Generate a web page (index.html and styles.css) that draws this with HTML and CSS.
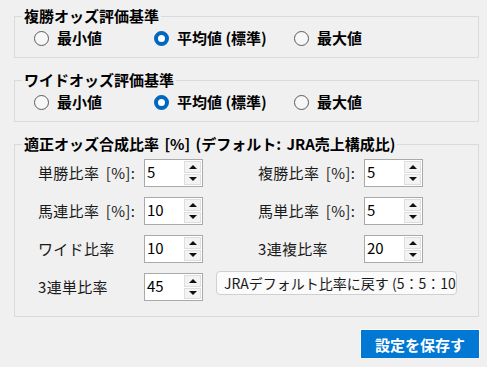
FILE: index.html
```html
<!DOCTYPE html>
<html lang="ja">
  <head>
    <meta charset="UTF-8" />
    <meta name="viewport" content="width=device-width, initial-scale=1.0" />
    <link rel="stylesheet" href="styles.css">
    <title>設定</title>
  </head>
  <body>
    <div class="wrapper">
      <fieldset class="group">
        <legend class="group__title">複勝オッズ評価基準</legend>
        <div class="radios">
          <label class="radio"><span class="radio__dot"></span>最小値</label>
          <label class="radio radio_wide"><span class="radio__dot radio__dot_on"></span>平均値 (標準)</label>
          <label class="radio"><span class="radio__dot"></span>最大値</label>
        </div>
      </fieldset>

      <fieldset class="group">
        <legend class="group__title">ワイドオッズ評価基準</legend>
        <div class="radios">
          <label class="radio"><span class="radio__dot"></span>最小値</label>
          <label class="radio radio_wide"><span class="radio__dot radio__dot_on"></span>平均値 (標準)</label>
          <label class="radio"><span class="radio__dot"></span>最大値</label>
        </div>
      </fieldset>

      <fieldset class="group group_last">
        <legend class="group__title">適正オッズ合成比率 [%] (デフォルト: JRA売上構成比)</legend>
        <div class="rates">
          <span class="rates__label">単勝比率 [%]:</span>
          <div class="spin"><span class="spin__value">5</span><div class="spin__btns"><span class="spin__btn"><i class="arrow arrow_up"></i></span><span class="spin__btn"><i class="arrow arrow_down"></i></span></div></div>
          <span></span>
          <span class="rates__label">複勝比率 [%]:</span>
          <div class="spin"><span class="spin__value">5</span><div class="spin__btns"><span class="spin__btn"><i class="arrow arrow_up"></i></span><span class="spin__btn"><i class="arrow arrow_down"></i></span></div></div>

          <span class="rates__label">馬連比率 [%]:</span>
          <div class="spin"><span class="spin__value">10</span><div class="spin__btns"><span class="spin__btn"><i class="arrow arrow_up"></i></span><span class="spin__btn"><i class="arrow arrow_down"></i></span></div></div>
          <span></span>
          <span class="rates__label">馬単比率 [%]:</span>
          <div class="spin"><span class="spin__value">5</span><div class="spin__btns"><span class="spin__btn"><i class="arrow arrow_up"></i></span><span class="spin__btn"><i class="arrow arrow_down"></i></span></div></div>

          <span class="rates__label">ワイド比率</span>
          <div class="spin"><span class="spin__value">10</span><div class="spin__btns"><span class="spin__btn"><i class="arrow arrow_up"></i></span><span class="spin__btn"><i class="arrow arrow_down"></i></span></div></div>
          <span></span>
          <span class="rates__label">3連複比率</span>
          <div class="spin"><span class="spin__value">20</span><div class="spin__btns"><span class="spin__btn"><i class="arrow arrow_up"></i></span><span class="spin__btn"><i class="arrow arrow_down"></i></span></div></div>

          <span class="rates__label">3連単比率</span>
          <div class="spin"><span class="spin__value">45</span><div class="spin__btns"><span class="spin__btn"><i class="arrow arrow_up"></i></span><span class="spin__btn"><i class="arrow arrow_down"></i></span></div></div>
          <button class="reset">JRAデフォルト比率に戻す (5：5：10</button>
        </div>
      </fieldset>

      <div class="actions">
        <button class="save">設定を保存す</button>
      </div>
    </div>
  </body>
</html>
```

FILE: styles.css
```css
*,
*::after,
*::before {
  box-sizing: border-box;
  margin: 0;
  padding: 0;
}

body {
  background: #f0f0f0;
  font-family: "Noto Sans CJK JP", "Noto Sans", sans-serif;
  color: #000;
}

.wrapper {
  width: 465px;
  margin-left: 14px;
  padding-top: 5px;
}

.group {
  border: 1px solid #dadada;
  padding: 0 0 9px 7px;
  margin: 0 0 11px;
  min-width: 0;
}

.group_last {
  margin-bottom: 0;
  padding-bottom: 15px;
}

.group__title {
  padding: 0 2px;
  font-size: 15px;
  font-weight: 700;
  line-height: 22px;
  word-spacing: 2px;
}

.radios {
  display: flex;
  align-items: center;
  height: 20px;
  margin-top: 1px;
  padding-left: 12px;
}

.radio {
  display: flex;
  align-items: center;
  gap: 8px;
  width: 120px;
  font-size: 15px;
  font-weight: 700;
  line-height: 20px;
}

.radio_wide {
  width: 140px;
}

.radio__dot {
  width: 15px;
  height: 15px;
  border-radius: 50%;
  border: 1px solid #5a5a5a;
  background: #f7f7f7;
}

.radio__dot_on {
  border: 4px solid #0067c0;
  background: #fff;
}

.rates {
  display: grid;
  grid-template-columns: 106px 59px 55px 106px 59px;
  grid-auto-rows: 28px;
  row-gap: 10px;
  padding: 4px 0 0 16px;
}

.rates__label {
  font-size: 15px;
  line-height: 28px;
  color: #1a1a1a;
  white-space: nowrap;
  word-spacing: 3px;
  letter-spacing: 0.3px;
}

.spin {
  display: flex;
  justify-content: space-between;
  border: 1px solid #a9a9a9;
  background: #fff;
  padding: 1px 1px 1px 2px;
}

.spin__value {
  font-size: 15px;
  line-height: 22px;
}

.spin__btns {
  display: flex;
  flex-direction: column;
  gap: 1px;
  width: 17px;
}

.spin__btn {
  flex: 1;
  display: flex;
  align-items: center;
  justify-content: center;
  background: #f3f3f3;
  border: 1px solid #dedede;
}

.arrow {
  width: 0;
  height: 0;
  border-left: 4px solid transparent;
  border-right: 4px solid transparent;
}

.arrow_up {
  border-bottom: 4px solid #111;
}

.arrow_down {
  border-top: 4px solid #111;
}

.reset {
  grid-column: 3 / 6;
  justify-self: start;
  align-self: start;
  width: 241px;
  height: 24px;
  margin: -2px 0 0 13px;
  padding: 0 0 0 7px;
  white-space: nowrap;
  text-align: left;
  font-family: inherit;
  font-size: 14px;
  color: #1a1a1a;
  background: #fbfbfb;
  border: 1px solid #d0d0d0;
  border-radius: 4px;
}

.actions {
  display: flex;
  justify-content: flex-end;
  margin-top: 13px;
}

.save {
  width: 118px;
  height: 28px;
  font-family: inherit;
  font-size: 15px;
  font-weight: 700;
  color: #fff;
  background: #0078d4;
  border: none;
  outline: 1px solid #fff;
}
```
